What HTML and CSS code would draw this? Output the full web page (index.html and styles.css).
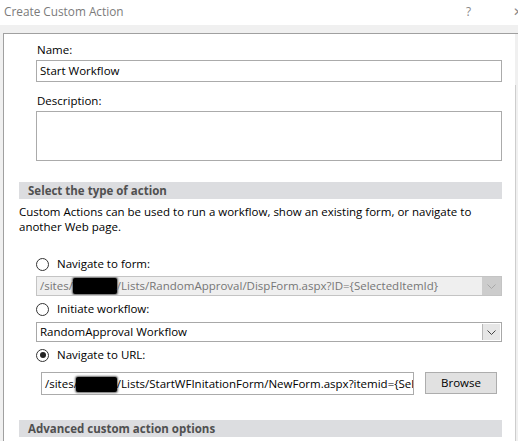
FILE: index.html
```html
<!DOCTYPE html>
<html>
<head>
<meta charset="utf-8">
<link rel="stylesheet" href="styles.css">
</head>
<body>
<div class="titlebar">
  <span class="title">Create Custom Action</span>
  <span class="help">?</span>
  <span class="close">✕</span>
</div>
<div class="dialog">
  <div class="panel">
    <div class="content">
      <div class="field">
        <div class="label">Name:</div>
        <div class="input">Start Workflow</div>
        <div class="label desc-label">Description:</div>
        <div class="textarea"></div>
      </div>

      <div class="band first-band">Select the type of action</div>
      <p class="intro">Custom Actions can be used to run a workflow, show an existing form, or navigate to another Web page.</p>

      <div class="field options">
        <div class="radio-row"><span class="radio"></span><span>Navigate to form:</span></div>
        <div class="select disabled">
          <span class="select-text">/sites/<span class="redact"></span>/Lists/RandomApproval/DispForm.aspx?ID={SelectedItemId}</span>
          <span class="arrow"><svg width="9" height="5" viewBox="0 0 9 5"><path d="M0.5 0.5 L4.5 4.5 L8.5 0.5" fill="none" stroke="currentColor" stroke-width="1"/></svg></span>
        </div>
        <div class="radio-row"><span class="radio"></span><span>Initiate workflow:</span></div>
        <div class="select second-select">
          <span class="select-text">RandomApproval Workflow</span>
          <span class="arrow"><svg width="9" height="5" viewBox="0 0 9 5"><path d="M0.5 0.5 L4.5 4.5 L8.5 0.5" fill="none" stroke="currentColor" stroke-width="1"/></svg></span>
        </div>
        <div class="radio-row"><span class="radio checked"></span><span>Navigate to URL:</span></div>
        <div class="url-row">
          <div class="url-input">/sites/<span class="redact"></span>/Lists/StartWFInitationForm/NewForm.aspx?itemid={Sel</div>
          <div class="button">Browse</div>
        </div>
      </div>

      <div class="band second-band">Advanced custom action options</div>
    </div>
    <div class="scroll"><div class="thumb"></div></div>
  </div>
</div>
</body>
</html>
```
FILE: styles.css
```css
html, body {
  margin: 0;
  padding: 0;
}
body {
  width: 518px;
  height: 441px;
  overflow: hidden;
  background: #f0f0f0;
  font-family: "Open Sans", "Noto Sans", "Liberation Sans", sans-serif;
  font-size: 11.5px;
  color: #000;
}
.titlebar {
  height: 25px;
  background: #fff;
  display: flex;
  align-items: center;
  padding-left: 4px;
  color: #7b7b7b;
  font-size: 11.8px;
}
.title {
  flex: 1;
  margin-top: -3px;
}
.help {
  width: 12px;
  margin-right: 35px;
  margin-top: -3px;
  color: #8a8a8a;
}
.close {
  width: 5px;
  overflow: hidden;
  color: #8a8a8a;
  margin-top: -3px;
}
.dialog {
  padding-top: 8px;
  padding-left: 3px;
}
.panel {
  height: 408px;
  background: #fff;
  border-top: 1px solid #a0a0a0;
  border-left: 1px solid #a0a0a0;
  display: flex;
}
.content {
  flex: 1;
  padding: 0 13px 0 15px;
}
.scroll {
  width: 3px;
  background: #f0f0f0;
  padding-top: 51px;
}
.thumb {
  height: 100%;
  border-left: 1px solid #cdcdcd;
}
.field {
  padding-left: 17px;
}
.label {
  height: 16px;
  line-height: 16px;
  margin-top: 8px;
  margin-bottom: 2px;
  padding-left: 1px;
}
.desc-label {
  margin-top: 11px;
}
.input {
  height: 20px;
  line-height: 20px;
  border: 1px solid #ababab;
  padding-left: 3px;
}
.textarea {
  height: 48px;
  border: 1px solid #ababab;
}
.band {
  height: 17px;
  line-height: 17px;
  background: #dcdde0;
  color: #505050;
  font-weight: bold;
  padding-left: 9px;
}
.first-band {
  margin-top: 21px;
}
.intro {
  margin: 5px 0 0 0;
  line-height: 15px;
}
.options {
  margin-top: 22px;
}
.radio-row {
  height: 16px;
  display: flex;
  align-items: center;
  line-height: 16px;
}
.radio {
  width: 11px;
  height: 11px;
  border: 1px solid #333;
  border-radius: 50%;
  margin-right: 8px;
  box-sizing: content-box;
  position: relative;
  background: #fff;
}
.radio.checked::after {
  content: "";
  position: absolute;
  left: 2.5px;
  top: 2.5px;
  width: 6px;
  height: 6px;
  border-radius: 50%;
  background: #222;
}
.select {
  height: 18px;
  border: 1px solid #a8a8a8;
  display: flex;
  align-items: stretch;
  margin-top: 4px;
  margin-bottom: 5px;
  background: #fff;
}
.second-select {
  margin-top: 5px;
  margin-bottom: 5px;
}
.select.disabled {
  background: #efefef;
  border-color: #c4c4c4;
  color: #767676;
}
.select-text {
  flex: 1;
  line-height: 18px;
  padding-left: 3px;
  white-space: nowrap;
  overflow: hidden;
}
.arrow {
  width: 17px;
  display: flex;
  align-items: center;
  justify-content: center;
  color: #444;
  background: #e6e6e6;
  border-left: 1px solid #b8b8b8;
  margin: 1px;
}
.disabled .arrow {
  background: #cccccc;
  color: #a8a8a8;
  border: none;
  margin: 0;
  width: 19px;
}
.redact {
  display: inline-block;
  width: 44px;
  height: 16px;
  background: #000;
  vertical-align: -4px;
  border-radius: 2px;
  box-shadow: 0 0 2px 1px rgba(0,0,0,0.6);
}
.url-row {
  display: flex;
  align-items: flex-start;
  margin-top: 9px;
  padding-left: 5px;
}
.url-input {
  width: 368px;
  height: 21px;
  line-height: 21px;
  border: 1px solid #ababab;
  padding-left: 3px;
  white-space: nowrap;
  overflow: hidden;
  box-sizing: content-box;
}
.url-input .redact {
  width: 41px;
  height: 15px;
  margin-left: -2px;
}
.button {
  width: 70px;
  height: 20px;
  line-height: 20px;
  margin-left: 11px;
  border: 1px solid #adadad;
  background: #e1e1e1;
  text-align: center;
}
.second-band {
  margin-top: 25px;
}
```
